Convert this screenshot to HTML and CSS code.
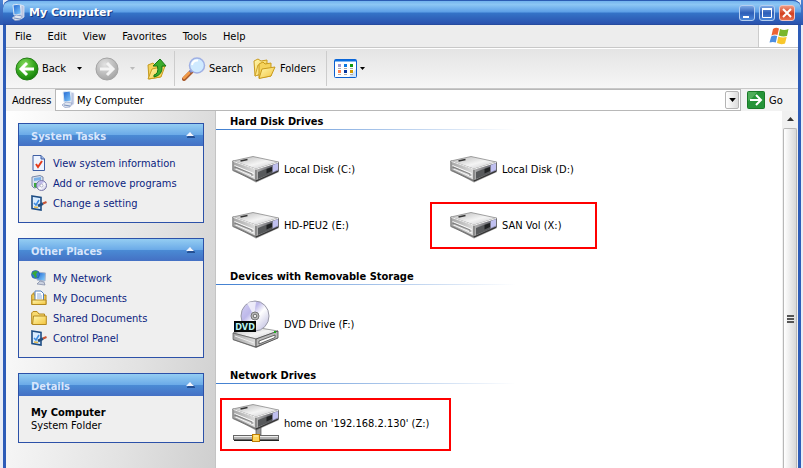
FILE: index.html
```html
<!DOCTYPE html>
<html lang="en">
<head>
<meta charset="utf-8">
<title>My Computer</title>
<link rel="stylesheet" href="styles.css">
</head>
<body>
<svg class="defs" aria-hidden="true">
  <defs>
    <linearGradient id="silver" x1="0" y1="0" x2="1" y2="1"><stop offset="0" stop-color="#b4b4b4"/><stop offset=".55" stop-color="#f4f4f4"/><stop offset="1" stop-color="#c4c4c8"/></linearGradient>
    <linearGradient id="side" x1="0" y1="0" x2="1" y2="0"><stop offset="0" stop-color="#a4a4a4"/><stop offset="1" stop-color="#dedede"/></linearGradient>
    <linearGradient id="front" x1="0" y1="0" x2="1" y2="0"><stop offset="0" stop-color="#b4b4b4"/><stop offset=".6" stop-color="#74747a"/><stop offset="1" stop-color="#8c8cb8"/></linearGradient>
    <radialGradient id="green" cx=".4" cy=".3" r=".7"><stop offset="0" stop-color="#8bdc62"/><stop offset=".6" stop-color="#36a81f"/><stop offset="1" stop-color="#17800c"/></radialGradient>
    <radialGradient id="grey" cx=".4" cy=".3" r=".7"><stop offset="0" stop-color="#e2e2e2"/><stop offset=".6" stop-color="#bdbdbd"/><stop offset="1" stop-color="#a6a6a6"/></radialGradient>
    <linearGradient id="gold" x1="0" y1="0" x2="1" y2="1"><stop offset="0" stop-color="#fff8b0"/><stop offset="1" stop-color="#f2c33c"/></linearGradient>
    <linearGradient id="screen" x1="0" y1="0" x2="1" y2="1"><stop offset="0" stop-color="#1c62d0"/><stop offset="1" stop-color="#8cd4ff"/></linearGradient>
    <linearGradient id="disc" x1="0" y1="0" x2="1" y2="1"><stop offset="0" stop-color="#d6d2f4"/><stop offset=".35" stop-color="#bdb8ea"/><stop offset=".55" stop-color="#ffffff"/><stop offset="1" stop-color="#b6b4dc"/></linearGradient>
  </defs>
  <symbol id="drive" viewBox="0 0 48 28">
    <path d="M1 15 24 27.500 47 17 46 14 24 23Z" fill="#555" opacity=".6"/>
    <path d="M.8 6V15.500L24 26V14Z" fill="url(#side)" stroke="#666" stroke-width=".8"/>
    <path d="M24 14V26L46.500 16V7.500Z" fill="url(#front)" stroke="#555" stroke-width=".8"/>
    <path d="M.8 6 21 1.500 46.500 7 24 14Z" fill="url(#silver)" stroke="#8a8a8a" stroke-width=".8"/>
    <path d="M1.500 6.500 24 14.300 46 7.500" fill="none" stroke="#f2f2f2" stroke-width="1"/>
    <path d="M8.500 6 15.500 4.500" stroke="#333" stroke-width="1.500"/>
    <path d="M2.500 10.500 22 18.500M2.500 13.500 22 22" stroke="#fafafa" fill="none"/>
    <path d="M3 14V12L20 19V21M2.500 15.500 23 25" stroke="#707070" stroke-width=".8" fill="none"/>
    <path d="M26 17 40 11.500V18L26 24Z" fill="#57595b"/>
    <path d="M34.500 14 40 12V16L34.500 18.500Z" fill="#202224"/>
    <path d="M41 10 46 8.300V14.500L41 17Z" fill="#c0c0f0"/>
    <path d="M24 26 46 16.200" stroke="#333" stroke-width="1.200"/>
  </symbol>
  <symbol id="netdrive" viewBox="0 0 48 38">
    <path d="M24 22h5v9h-5z" fill="#999" stroke="#555" stroke-width=".7"/>
    <rect x="1.500" y="31.500" width="45" height="4" fill="#b4b4b4" stroke="#666"/>
    <path d="M2 32.500h44" stroke="#eee"/>
    <path d="M2 36.500h45" stroke="#222"/>
    <rect x="20.500" y="30.500" width="7" height="7" fill="#ffd65c" stroke="#bd7d00"/>
    <path d="M22 32h4" stroke="#fff4b0"/>
    <use href="#drive" width="48" height="28" y="-1"/>
  </symbol>
  <symbol id="pc" viewBox="0 0 14 18">
    <path d="M2 1 9 0 11 10 3 11Z" fill="url(#screen)" stroke="#dce8f4"/>
    <path d="M10 1 13 2V13L10 15Z" fill="#b8c4e0" stroke="#e8ecf6" stroke-width=".7"/>
    <path d="M1 14 5 11 11 12 9 16 4 16.500Z" fill="#e0e6f0" stroke="#8c9cc4" stroke-width=".7"/>
    <path d="M3 14 9 15" stroke="#7890bc"/>
  </symbol>
  <symbol id="back" viewBox="0 0 24 24">
    <circle cx="12" cy="12" r="11" fill="url(#green)" stroke="#247d17"/>
    <path d="M19 12H7M12 6 6 12 12 18" fill="none" stroke="#fff" stroke-width="3"/>
  </symbol>
  <symbol id="forward" viewBox="0 0 24 24">
    <circle cx="12" cy="12" r="11" fill="url(#grey)" stroke="#a4a4a4"/>
    <path d="M5 12H17M12 6 18 12 12 18" fill="none" stroke="#f4f4f4" stroke-width="3"/>
  </symbol>
  <symbol id="up" viewBox="0 0 22 24">
    <path d="M2 8 7 6 9 8 14 7V20L3 22Z" fill="#f5d35c" stroke="#c49a20"/>
    <path d="M2 22 6 12 19 9 15 20Z" fill="url(#gold)" stroke="#c99b1d"/>
    <path d="M8 18Q13 17 11.500 9H7L14 2 20 9H16Q17 18 8 20Z" fill="#3cac2c" stroke="#157815"/>
  </symbol>
  <symbol id="search" viewBox="0 0 24 24">
    <path d="M2 22 10 14" stroke="#a85a2c" stroke-width="4" stroke-linecap="round"/>
    <path d="M2 21 7 16" stroke="#f09a48" stroke-width="2.500" stroke-linecap="round"/>
    <path d="M8 15 10 13" stroke="#7c8ed0" stroke-width="3"/>
    <circle cx="15" cy="8.500" r="7.500" fill="#cfeaff" stroke="#9fb0e4" stroke-width="1.500"/>
    <path d="M10 8Q11 3 16 3.500" fill="none" stroke="#fff" stroke-width="2"/>
  </symbol>
  <symbol id="folders" viewBox="0 0 24 22">
    <path d="M1 3 5 1 8 3 14 2V14L2 18Z" fill="url(#gold)" stroke="#c99b1d"/>
    <path d="M2 18 5 7 8 7V16Z" fill="#fbe68a" stroke="#d0a42c"/>
    <path d="M6 6 10 4 12 6 18 5V18L6 20Z" fill="#f5d35c" stroke="#c99b1d"/>
    <path d="M6 20.500 9 11 22 9 18 18Z" fill="url(#gold)" stroke="#c99b1d"/>
  </symbol>
  <symbol id="views" viewBox="0 0 23 19">
    <rect x=".5" y=".5" width="22" height="18" rx="1" fill="#fff" stroke="#0a5fd0"/>
    <path d="M15 18 22 10V18Z" fill="#cfe4fa"/>
    <path d="M1 1.500H22" stroke="#0a6fe0" stroke-width="2"/>
    <path d="M4 5h3v3H4z" fill="#a09ad0"/><path d="M10 5h3v3h-3z" fill="#0a78e0"/><path d="M16 5h3v3h-3z" fill="#109810"/>
    <path d="M4 11h3v3H4z" fill="#ff8050"/><path d="M10 11h3v3h-3z" fill="#0838a0"/><path d="M16 11h3v3h-3z" fill="#d09800"/>
    <path d="M4 9.500h3m3 0h3m3 0h3M4 15.500h3m3 0h3m3 0h3" stroke="#aaa"/>
  </symbol>
  <symbol id="flag" viewBox="0 0 20 18">
    <path d="M4 2Q7 0 10 1.500L8.500 8Q6 7 2.500 8.500Z" fill="#ee6432"/>
    <path d="M11 2Q15 4 19.500 2L18 9Q14 10 9.700 8.500Z" fill="#78b62c"/>
    <path d="M2.200 9.500Q5 8 8.200 9L6.800 15.500Q4 14.500.5 15.500Z" fill="#4d8ee0"/>
    <path d="M9.300 9.500Q13 11 17.700 10L16 16.500Q12 18 8 16Z" fill="#f8c72c"/>
  </symbol>
  <symbol id="go" viewBox="0 0 18 18">
    <rect x=".5" y=".5" width="17" height="17" rx="1" fill="#259438" stroke="#1a7a28"/>
    <path d="M1 1H10Q5 8 1 10Z" fill="#6cc070" opacity=".6"/>
    <path d="M3 9H14M9 4 14 9 9 14" fill="none" stroke="#fff" stroke-width="2"/>
  </symbol>
  <symbol id="sheet" viewBox="0 0 16 16">
    <path d="M2 .5H10L13.500 4V15.500H2Z" fill="#eef4ff" stroke="#3f5fa4"/>
    <path d="M10 .5V4H13.500" fill="#9fb8e8" stroke="#3f5fa4"/>
    <path d="M5 9 7 12 11 6" fill="none" stroke="#e43c1c" stroke-width="2"/>
  </symbol>
  <symbol id="programs" viewBox="0 0 16 16">
    <path d="M1 2 9 .5 12 2V11L3 13 1 11Z" fill="#d8e0ee" stroke="#7888a8"/>
    <path d="M3 3 10 2V5L3 6Z" fill="#78b0e8"/>
    <path d="M3 8h3v5l-3-1z" fill="#3ca83c"/>
    <circle cx="10.500" cy="10.500" r="5" fill="url(#disc)" stroke="#7878a8"/>
    <circle cx="10.500" cy="10.500" r="1.500" fill="#fff" stroke="#8888a8" stroke-width=".6"/>
  </symbol>
  <symbol id="setting" viewBox="0 0 16 16">
    <path d="M1 1 10 2.500V15L1 13.500Z" fill="#d8ecff" stroke="#1d4d84" stroke-width="1.600"/>
    <path d="M3 8 5 10 8 5" fill="none" stroke="#3c8be0" stroke-width="1.500"/>
    <path d="M3 12 7 12.500" stroke="#e0b84c" stroke-width="1.500"/>
    <path d="M7 11 12 8.500" stroke="#234e7c" stroke-width="3"/>
    <path d="M12 8.500 15.500 7" stroke="#c85434" stroke-width="2"/>
  </symbol>
  <symbol id="network" viewBox="0 0 16 16">
    <path d="M6 2 14.500 3 14 11 6 10Z" fill="url(#screen)" stroke="#a8b4cc"/>
    <path d="M9 11 13 12 14 15 6 14Z" fill="#ccd2e0" stroke="#7884a0" stroke-width=".7"/>
    <circle cx="4.500" cy="4.500" r="4" fill="#2e78d0" stroke="#245498" stroke-width=".6"/>
    <path d="M2 2Q5 0 7 2L5 4 6 7 4 8 3 5 1 4Z" fill="#38a838"/>
  </symbol>
  <symbol id="docs" viewBox="0 0 16 16">
    <path d="M.7 5 3 2.500V5H15V14.500H.7Z" fill="#efc854" stroke="#b48920"/>
    <path d="M4 1H10L12.500 3.500V11H4Z" fill="#fff" stroke="#5580bc"/>
    <path d="M6 4h4M6 6h5M6 8h5" stroke="#8caedc"/>
    <path d="M1 10H15V14.500H1Z" fill="url(#gold)" stroke="#b48920"/>
  </symbol>
  <symbol id="folder" viewBox="0 0 16 16">
    <path d="M.7 14V3L2 1.500H6L8 4H13.500V14Z" fill="#f8da70" stroke="#b48920"/>
    <path d="M2.500 6H15.300V14.500H1.500Z" fill="url(#gold)" stroke="#b48920"/>
  </symbol>
  <symbol id="caret" viewBox="0 0 5 3"><path d="M0 0H5L2.500 3Z" fill="currentColor"/></symbol>
  <symbol id="collapse" viewBox="0 0 10 7"><path d="M2 6 6 2 10 6V7H2Z" fill="#234f94"/><path d="M1 5 5 1 9 5Z" fill="#f2f6ff"/></symbol>
</svg>

<div class="desktop">
  <div class="behind"><div class="behind-title"></div></div>
  <div class="window">
    <header class="titlebar">
      <svg class="ico-pc"><use href="#pc"/></svg>
      <h1>My Computer</h1>
      <button class="cap" aria-label="Minimize"><svg viewBox="0 0 14 14"><path d="M3 11H9" stroke="#fff" stroke-width="2"/></svg></button>
      <button class="cap" aria-label="Maximize"><svg viewBox="0 0 14 14"><path d="M2.500 3V11.500H11.500V3Z" fill="none" stroke="#fff"/><path d="M2 3H12" stroke="#fff" stroke-width="2"/></svg></button>
      <button class="cap close" aria-label="Close"><svg viewBox="0 0 14 14"><path d="M3 3 11 11M11 3 3 11" stroke="#fff" stroke-width="2"/></svg></button>
    </header>

    <div class="menubar">
      <nav class="menus">
        <button>File</button><button>Edit</button><button>View</button><button>Favorites</button><button>Tools</button><button>Help</button>
      </nav>
      <div class="brand"><svg><use href="#flag"/></svg></div>
    </div>

    <div class="toolbar">
      <button class="tool back"><svg class="ico24"><use href="#back"/></svg><span>Back</span><svg class="caret"><use href="#caret"/></svg></button>
      <button class="tool forward" aria-label="Forward" disabled><svg class="ico24"><use href="#forward"/></svg><svg class="caret"><use href="#caret"/></svg></button>
      <button class="tool" aria-label="Up"><svg class="ico-up"><use href="#up"/></svg></button>
      <span class="sep"></span>
      <button class="tool search"><svg class="ico24"><use href="#search"/></svg><span>Search</span></button>
      <button class="tool"><svg class="ico24"><use href="#folders"/></svg><span>Folders</span></button>
      <span class="sep"></span>
      <button class="tool" aria-label="Views"><svg class="ico-views"><use href="#views"/></svg><svg class="caret"><use href="#caret"/></svg></button>
    </div>

    <div class="addressbar">
      <label for="address">Address</label>
      <div class="field">
        <svg class="ico-pc"><use href="#pc"/></svg>
        <select id="address"><option>My Computer</option></select>
        <span class="drop"><svg><use href="#caret"/></svg></span>
      </div>
      <button class="go"><svg><use href="#go"/></svg><span>Go</span></button>
    </div>

    <div class="body">
      <aside class="sidebar">
        <section class="panel">
          <h2>System Tasks<svg><use href="#collapse"/></svg></h2>
          <ul>
            <li><a href="#"><svg><use href="#sheet"/></svg>View system information</a></li>
            <li><a href="#"><svg><use href="#programs"/></svg>Add or remove programs</a></li>
            <li><a href="#"><svg><use href="#setting"/></svg>Change a setting</a></li>
          </ul>
        </section>
        <section class="panel">
          <h2>Other Places<svg><use href="#collapse"/></svg></h2>
          <ul>
            <li><a href="#"><svg><use href="#network"/></svg>My Network</a></li>
            <li><a href="#"><svg><use href="#docs"/></svg>My Documents</a></li>
            <li><a href="#"><svg><use href="#folder"/></svg>Shared Documents</a></li>
            <li><a href="#"><svg><use href="#setting"/></svg>Control Panel</a></li>
          </ul>
        </section>
        <section class="panel">
          <h2>Details<svg><use href="#collapse"/></svg></h2>
          <div class="details"><strong>My Computer</strong><span>System Folder</span></div>
        </section>
      </aside>

      <main class="content">
        <section class="group">
          <h2>Hard Disk Drives</h2>
          <div class="tiles">
            <a class="tile" href="#"><svg class="drive"><use href="#drive"/></svg><span>Local Disk (C:)</span></a>
            <a class="tile" href="#"><svg class="drive"><use href="#drive"/></svg><span>Local Disk (D:)</span></a>
            <a class="tile" href="#"><svg class="drive"><use href="#drive"/></svg><span>HD-PEU2 (E:)</span></a>
            <a class="tile marked-san" href="#"><svg class="drive"><use href="#drive"/></svg><span>SAN Vol (X:)</span></a>
          </div>
        </section>
        <section class="group">
          <h2>Devices with Removable Storage</h2>
          <div class="tiles">
            <a class="tile" href="#">
              <svg class="dvd" viewBox="0 0 48 48">
                <path d="M1 35 24 45 46 33V38L24 48 1 40Z" fill="#555" opacity=".7"/>
                <path d="M1 33 22 27 46 31 24 39Z" fill="url(#silver)" stroke="#777" stroke-width=".7"/>
                <path d="M1 33V39.500L24 47V39Z" fill="url(#side)" stroke="#555" stroke-width=".7"/>
                <path d="M24 39V47L46 38V31Z" fill="#b8b8b8" stroke="#444" stroke-width=".8"/>
                <path d="M27 41 43 35V37.500L27 44Z" fill="#fff" stroke="#333" stroke-width=".7"/>
                <path d="M3 36 22 43" stroke="#eee"/>
                <rect x="42" y="31" width="2" height="2" fill="#20a820"/>
                <ellipse cx="23" cy="16" rx="14" ry="15" fill="url(#disc)" stroke="#9a9aa8"/>
                <path d="M22 16 15 3Q20 1 24 2Z" fill="#fff" opacity=".7"/>
                <circle cx="23" cy="16" r="4" fill="#bbb" stroke="#777"/>
                <circle cx="23" cy="16" r="1.800" fill="#eee" stroke="#444" stroke-width=".7"/>
                <rect x="2" y="21" width="22" height="11" fill="#050808"/>
                <text x="13" y="30" text-anchor="middle">DVD</text>
              </svg>
              <span>DVD Drive (F:)</span>
            </a>
          </div>
        </section>
        <section class="group">
          <h2>Network Drives</h2>
          <div class="tiles">
            <a class="tile marked-home" href="#"><svg class="netdrive"><use href="#netdrive"/></svg><span>home on '192.168.2.130' (Z:)</span></a>
          </div>
        </section>
      </main>

      <div class="scrollbar">
        <div class="scroll-up"><svg viewBox="0 0 7 4"><path d="M0 4 3.500 0 7 4Z" fill="#333"/></svg></div>
        <div class="thumb"><span class="grip"></span></div>
      </div>
    </div>
  </div>
  <div class="behind right"><div class="behind-title"></div></div>
</div>
</body>
</html>
```

FILE: styles.css
```css
*, *::before, *::after { box-sizing: border-box; }

body {
  margin: 0;
  font: 11px/13px "DejaVu Sans Condensed", "DejaVu Sans", Tahoma, sans-serif;
  color: #000;
  overflow: hidden;
}

h1, h2, ul { margin: 0; padding: 0; font-size: 11px; }
ul { list-style: none; }
a { color: inherit; text-decoration: none; }
svg { display: block; flex: none; }
button {
  font: inherit;
  color: inherit;
  background: none;
  border: 0;
  padding: 0;
}

.defs { position: absolute; width: 0; height: 0; }

.desktop { display: flex; height: 100vh; background: #e8ecf6; }
.behind { flex: none; width: 3px; }
.behind.right { width: 2px; }
.behind-title { height: 25px; background: linear-gradient(#4c84d4, #2a56b0); }

.window {
  flex: 1;
  min-width: 0;
  display: flex;
  flex-direction: column;
  border-left: 3px solid #2d5cb8;
  border-right: 3px solid #2d5cb8;
  border-radius: 8px 8px 0 0;
  background: #2d5cb8;
}

.titlebar {
  flex: none;
  display: flex;
  align-items: center;
  gap: 4px;
  height: 25px;
  margin: 0 -3px;
  padding: 0 6px 0 8px;
  border-top: 1px solid #2c5cb4;
  border-radius: 8px 8px 0 0;
  background: linear-gradient(#74b4ee 0, #8cc6f4 15%, #5c9ee6 46%, #3474c8 50%, #2a52ae 96%, #23448f);
  color: #fff;
}
.ico-pc { width: 14px; height: 18px; }
.titlebar h1 {
  flex: 1;
  font: bold 11px/16px "DejaVu Sans", sans-serif;
  text-shadow: 1px 1px #173a80;
}
.cap {
  width: 16px;
  height: 16px;
  border: 1px solid #b4cef0;
  border-radius: 3px;
  background: linear-gradient(#7ca8e4, #2d5eb8 50%, #4a86d8);
}
.cap svg { width: 14px; height: 14px; }
.cap.close { background: linear-gradient(#f09880, #d24020 55%, #e87050); border-color: #f0c4c0; }

.menubar { flex: none; display: flex; height: 23px; background: #ededed; border-bottom: 1px solid #c8c8c8; }
.menus { flex: 1; display: flex; gap: 16px; padding-left: 9px; border-right: 1px solid #ccc; }
.brand { display: flex; align-items: center; justify-content: center; width: 39px; background: #fff; }
.brand svg { width: 20px; height: 18px; }

.toolbar {
  flex: none;
  display: flex;
  align-items: center;
  height: 41px;
  padding-left: 9px;
  border-top: 1px solid #fff;
  border-bottom: 1px solid #c8c8c8;
  background: linear-gradient(#e4e4e4, #f6f6f6);
}
.tool { display: flex; align-items: center; gap: 3px; }
.ico24 { width: 24px; height: 24px; }
.ico-up { width: 22px; height: 24px; }
.ico-views { width: 23px; height: 19px; }
.caret { width: 5px; height: 3px; }
.back .caret { margin-left: 8px; }
.back { margin-right: 13px; }
.forward { margin-right: 11px; gap: 11px; color: #bbb; }
.search { margin-right: 10px; }
.sep { width: 1px; height: 35px; margin: 0 7px 0 6px; background: #ccc; }
.search + .tool + .sep { margin-left: 10px; }

.addressbar { flex: none; display: flex; height: 22px; background: #f2f2f2; }
.addressbar label { display: flex; align-items: center; width: 49px; padding-left: 6px; }
.field {
  flex: 1;
  display: flex;
  align-items: center;
  padding: 1px;
  border: 1px solid #b8b8b8;
  background: #fff;
}
.field .ico-pc { margin: 0 2px 0 4px; }
.field select {
  flex: 1;
  align-self: stretch;
  appearance: none;
  border: 0;
  padding: 0;
  background: none;
  font: inherit;
  color: #000;
}
.drop {
  display: flex;
  align-items: center;
  justify-content: center;
  width: 14px;
  height: 18px;
  border: 1px solid #b4b4b4;
  border-radius: 2px;
  background: linear-gradient(90deg, #fff, #ddd);
}
.drop svg { width: 7px; height: 4px; }
.go { display: flex; align-items: center; gap: 4px; width: 57px; padding-left: 6px; }
.go svg { width: 18px; height: 18px; }

.body { flex: 1; min-height: 0; display: flex; background: #fff; }

.sidebar {
  flex: none;
  display: flex;
  flex-direction: column;
  gap: 15px;
  width: 210px;
  padding: 12px 11px 0 12px;
  border-right: 1px solid #c4c4c4;
  background: linear-gradient(100deg, #fff, #e2e2e2 65%, #cfcfcf);
}
.panel { border: 1px solid #2c51a8; background: #efefef; color: #0c2480; }
.panel h2 {
  display: flex;
  align-items: center;
  justify-content: space-between;
  height: 22px;
  padding: 2px 8px 0 12px;
  background: linear-gradient(#94cdf2, #6cabe8 48%, #4a8ad4 52%, #4470c4);
  color: #d8e6fc;
}
.panel h2 svg { width: 10px; height: 7px; margin-bottom: 4px; }
.panel ul { padding: 7px 12px 9px; }
.panel li a { display: flex; align-items: center; gap: 6px; height: 20px; }
.panel li svg { width: 16px; height: 16px; }
.details { display: flex; flex-direction: column; padding: 10px 12px; color: #000; }

.content { flex: 1; min-width: 0; overflow: hidden; }
.group { margin-bottom: 13px; }
.group h2 {
  height: 19px;
  padding: 4px 14px 0;
  border-bottom: 1px solid;
  border-image: linear-gradient(90deg, #3f7ed0, #fff 300px) 1;
}
.tiles { display: grid; grid-template-columns: repeat(auto-fill, 218px); padding-top: 11px; }
.tile { position: relative; display: flex; align-items: center; gap: 4px; height: 56px; padding-left: 16px; white-space: nowrap; }
.drive { width: 48px; height: 28px; }
.dvd { width: 48px; height: 48px; }
.dvd text { font: bold 9px "DejaVu Sans Condensed", sans-serif; fill: #b8f4f4; }
.netdrive { width: 48px; height: 38px; }

/* Red call-outs drawn over the highlighted drives */
.marked-san::after, .marked-home::after { content: ""; position: absolute; border: 2px solid #f00; }
.marked-san::after { left: -4px; top: 5px; width: 167px; height: 47px; }
.marked-home::after { left: 4px; top: 3px; width: 231px; height: 53px; }

.scrollbar { flex: none; display: flex; flex-direction: column; width: 16px; background: #f0f0f0; }
.scroll-up { display: flex; align-items: center; justify-content: center; height: 17px; padding-bottom: 2px; }
.scroll-up svg { width: 7px; height: 4px; }
.thumb {
  flex: 1;
  margin: 0 1px;
  padding-top: 186px;
  border: 1px solid #b8b8b8;
  border-bottom: 0;
  border-radius: 2px 2px 0 0;
  background: linear-gradient(90deg, #fff, #d8d8d8);
}
.grip {
  display: block;
  width: 7px;
  height: 8px;
  margin: 0 auto;
  background: repeating-linear-gradient(#555 0 2px, #eee 2px 3px);
}
```
